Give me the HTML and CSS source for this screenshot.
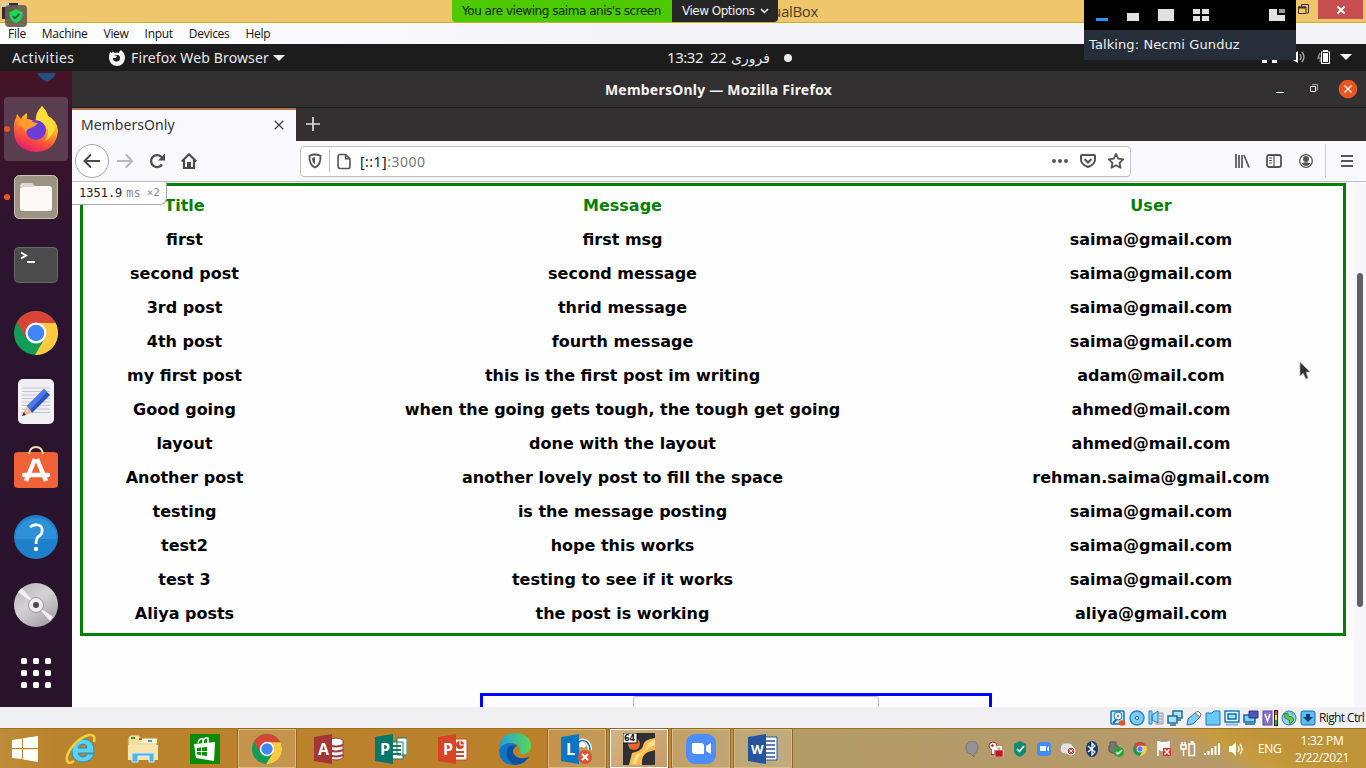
FILE: index.html
```html
<!DOCTYPE html>
<html lang="en">
<head>
<meta charset="utf-8">
<title>MembersOnly</title>
<link rel="stylesheet" href="styles.css">
</head>
<body>
<svg class="defs" width="0" height="0">
  <symbol id="chrome" viewBox="0 0 44 44">
    <circle cx="22" cy="22" r="22" fill="#129c57"/>
    <path d="M3 11A22 22 0 0 1 41 11Q42 12 41.500 12H22L12 27Z" fill="#d94436"/>
    <path d="M22 12H41.600A22 22 0 0 1 21 44L31 27Z" fill="#ffca42"/>
    <circle cx="22" cy="22" r="10.500" fill="#fff"/><circle cx="22" cy="22" r="8.300" fill="#4285f4"/>
  </symbol>
</svg>
<div class="screen">
  <header class="vm-title">
    <svg class="vm-logo" width="25" height="25" viewBox="0 0 25 25"><rect x="0" width="16" height="16" fill="#342838"/><path d="M4 12L14 3V15H5Z" fill="#80652f"/><path d="M0 0H7V4H0Z" fill="#d4ced0"/><rect x="3" y="2" width="22" height="22" rx="4" fill="#66614c" opacity=".93"/><path d="M14 6Q17 8 20.500 9V13Q19 18 14 20Q9 18 7.500 13V9Q11 8 14 6Z" fill="#1bd75b"/><path d="M10.800 13L13 15.300L17.500 10.800" stroke="#444e3e" stroke-width="1.800" fill="none"/></svg>
    <span class="vm-name">ualBox</span>
    <div class="win-controls"><svg width="12" height="12" viewBox="0 0 12 12" fill="none" stroke="#382e22"><path d="M3.500 3V.5H10.500V9H8.500"/><path d="M.5 3V9.500H8V3Z"/><path d="M0 3.500H8" stroke-width="2"/></svg><span class="win-close"><svg width="10" height="10" viewBox="0 0 10 10" stroke="#fff" stroke-width="2"><path d="M1.500 1.500L8.500 8.500M8.500 1.500L1.500 8.500"/></svg></span></div>
  </header>
  <nav class="vm-menu"><span>File</span><span>Machine</span><span>View</span><span>Input</span><span>Devices</span><span>Help</span></nav>
  <div class="gnome">
    <span class="activities">Activities</span>
    <div class="app-menu"><svg width="16" height="16" viewBox="0 0 16 16"><path d="M4 1.500L6 3Q8 2 10 3Q10 1 12 0Q16 3 16 8A8 8 0 0 1 0 8Q0 3 1.500 1.500L2.500 3Z" fill="#f0f0f0"/><path d="M8 5Q11 5 11 8A3.500 3.500 0 0 1 4 8L7 8L8 6L5 5Z" fill="#1c1c1c"/></svg><span class="app-name">Firefox Web Browser</span><i class="caret"></i></div>
    <div class="clock"><span class="time">13:32</span><span class="day">22</span><span class="month" lang="fa">فروری</span><i class="dot"></i></div>
    <svg class="gnome-tray" width="96" height="20" viewBox="0 0 96 20"><path d="M8 9H13V14H8ZM18 9H23V14H18Z" fill="#fff"/><path d="M39 6L44 2V14L39 11Z" fill="#fff"/><path d="M46 5Q48 8 46 11M48 3Q52 8 48 13" stroke="#aaa" fill="none" stroke-width="1.300"/><path d="M66 4L64 9H67L66 13" stroke="#8d8d8d" fill="none" stroke-width="1.500"/><path d="M69 1H74V2.500H76V15H67V2.500H69Z" fill="#fff"/><path d="M68.500 3.500H74.500V13.500H68.500Z" fill="none" stroke="#222" stroke-width="1"/><path d="M86 5H98L92 11Z" fill="#fff"/></svg>
  </div>
  <div class="vm-body">
    <aside class="dock">
      <svg class="dock-cut" width="24" height="12" viewBox="0 0 24 12"><path d="M3 2L21 2Q20 7 12 11Q7 9 3 4Z" fill="#254e83"/></svg>
      <div class="app active running"><svg width="46" height="48" viewBox="0 0 46 48"><defs><linearGradient id="ff" x1=".8" y1="0" x2=".35" y2="1"><stop offset="0" stop-color="#fff44f"/><stop offset=".4" stop-color="#ffb52a"/><stop offset=".72" stop-color="#ff5536"/><stop offset="1" stop-color="#e41a70"/></linearGradient></defs><path d="M29 1Q33 5 35 11Q44 15 45 26Q43 46 23 47Q3 46 1 28Q0 18 3 13L4 9L8 14Q10 10 14 8V14L22 16L29 1Z" fill="url(#ff)"/><circle cx="23" cy="25" r="10" fill="#6b3ed5"/><path d="M8 14L16 14Q20 18 25 18Q22 22 18 23Q13 24 13 28Q9 19 5 20Z" fill="#ff982f"/><path d="M29 1Q22 8 23 15Q32 16 35 26Q35 32 32 36Q42 30 42 20Q40 14 35 11Q33 5 29 1Z" fill="#ffde38"/></svg></div>
      <div class="app running"><svg width="44" height="44" viewBox="0 0 44 44"><rect x=".5" y=".5" width="43" height="43" rx="5" fill="#9c9483" stroke="#c8c4b5"/><path d="M6 11Q6 8 9 8H18L22 12H6Z" fill="#ddd6ce"/><path d="M6 14Q6 12 9 12H18L21 11H35Q38 11 38 14V33Q38 36 35 36H9Q6 36 6 33Z" fill="#fcf9f7"/></svg></div>
      <div class="app"><svg width="44" height="36" viewBox="0 0 44 36"><rect x=".5" y=".5" width="43" height="35" rx="4" fill="#4b4b4b" stroke="#686567"/><path d="M7 5.500L12 8.500L7 11.500M13 15H21" stroke="#fff" stroke-width="2" fill="none"/></svg></div>
      <div class="app"><svg width="44" height="44"><use href="#chrome"/></svg></div>
      <div class="app"><svg width="38" height="45" viewBox="0 0 38 45"><rect x="1" y="0" width="36" height="45" rx="5" fill="#f0f0f2"/><path d="M5 9H33M5 12.500H33M5 16H33M5 19.500H33M5 23H33M5 26.500H33M5 30H33M5 33.500H33" stroke="#c6c6ca"/><path d="M27 10L33 16L15 34L10 27Z" fill="#2953bf"/><path d="M27 10L30 13L13 31L10 27Z" fill="#4c78e8"/><path d="M10 27L15 34L5 37Z" fill="#edbd9f"/><path d="M7 33L9 36L5 37Z" fill="#333"/></svg></div>
      <div class="app"><svg class="store" width="44" height="44" viewBox="0 0 44 44"><rect y="7" width="44" height="36" rx="4" fill="#ef6136"/><path d="M15 9Q16 2 22 2T29 9" stroke="#f8d9ac" stroke-width="2" fill="none"/><path d="M21 14L12 36M23 14L32 36" stroke="#fff" stroke-width="4.500"/><path d="M10 30H34" stroke="#fff" stroke-width="4.500" stroke-linecap="round"/></svg></div>
      <div class="app"><svg width="44" height="44" viewBox="0 0 44 44"><circle cx="22" cy="22" r="22" fill="#1e7fca"/><path d="M1 24A21 21 0 0 1 43 24Z" fill="#2d91da"/><path d="M16 12Q20 9 24 10Q29 11 28 17Q28 19 25 21Q22 23 22 29" fill="none" stroke="#fff" stroke-width="2.800"/><circle cx="22" cy="34" r="2.200" fill="#fff"/></svg></div>
      <div class="app"><svg width="44" height="44" viewBox="0 0 44 44"><defs><linearGradient id="cd" x2=".7" y2="1"><stop stop-color="#b5b2b5"/><stop offset=".5" stop-color="#d4d2d4"/><stop offset="1" stop-color="#a6a3a6"/></linearGradient></defs><circle cx="22" cy="22" r="22" fill="url(#cd)"/><path d="M4 9L8 5L22 22L39 34L36 38L22 22Z" fill="#f3f3f3"/><circle cx="22" cy="22" r="7.500" fill="#ededed" stroke="#999"/><circle cx="22" cy="22" r="3" fill="#494949"/></svg></div>
      <div class="app"><svg width="30" height="30" viewBox="0 0 30 30" fill="#fff"><g id="dots"><rect width="6" height="6" rx="1.500"/><rect x="12" width="6" height="6" rx="1.500"/><rect x="24" width="6" height="6" rx="1.500"/></g><use href="#dots" y="12"/><use href="#dots" y="24"/></svg></div>
    </aside>
    <main class="browser">
      <div class="ff-title"><span>MembersOnly — Mozilla Firefox</span><svg class="ff-controls" width="90" height="20" viewBox="0 0 90 20"><path d="M8 12.500H16" stroke="#fff"/><path d="M44.500 5V4.500H49.500V10H48.500" stroke="#aaa" fill="none"/><path d="M42.500 6.500H47.500V11.500H42.500Z" stroke="#fff" fill="none"/><circle cx="80" cy="9" r="9.300" fill="#e95420"/><path d="M76.500 5.500L83.500 12.500M83.500 5.500L76.500 12.500" stroke="#fff" stroke-width="1.400"/></svg></div>
      <div class="tabs"><div class="tab"><span>MembersOnly</span><svg width="10" height="10" viewBox="0 0 10 10"><path d="M.7.7L9.300 9.300M9.300.7L.7 9.300" stroke="#444" stroke-width="1.300"/></svg></div><div class="new-tab"><svg width="14" height="14"><path d="M7 0V14M0 7H14" stroke="#ddd" stroke-width="1.700"/></svg></div></div>
      <div class="toolbar">
        <div class="back"><svg width="18" height="16" viewBox="0 0 18 16"><path d="M8 1.500L1.500 8L8 14.500M2 8H17" stroke="#4b4b4b" stroke-width="2" fill="none"/></svg></div>
        <svg class="forward" width="16" height="16" viewBox="0 0 16 16"><path d="M9 1.500L15 8L9 14.500M0 8H14" stroke="#b8b7ba" stroke-width="2" fill="none"/></svg>
        <svg class="reload" width="16" height="16" viewBox="0 0 16 16"><path d="M13 11.500A6 6 0 1 1 12 3.500L14.500 6" stroke="#4b4b4b" stroke-width="2.200" fill="none"/><path d="M16 .5V7.500H9Z" fill="#4b4b4b"/></svg>
        <svg class="home" width="16" height="16" viewBox="0 0 16 16"><path d="M.7 8.500L8 1.300L15.300 8.500M3 7V15H13V7" stroke="#4b4b4b" stroke-width="2.200" fill="none"/><path d="M6 9H10V15H6Z" fill="#4b4b4b"/></svg>
        <div class="urlbar">
          <svg width="14" height="16" viewBox="0 0 14 16"><path d="M7 1.500Q10 1.500 12.500 2.800Q13 12 7 14.500Q1 12 1.500 2.800Q4 1.500 7 1.500Z" stroke="#555" stroke-width="1.800" fill="none"/><path d="M7 4V11.500Q4 9 4 5Z" fill="#555"/></svg><i class="url-sep"></i>
          <svg width="14" height="17" viewBox="0 0 13 15"><path d="M3 1H8L12 5V12.500Q12 14 10 14H3Q1 14 1 12V3Q1 1 3 1ZM8 1V5H12" stroke="#555" stroke-width="1.500" fill="none"/></svg>
          <span class="url"><b>[::1]</b>:3000</span>
          <svg class="url-actions" width="76" height="18" viewBox="0 0 76 18"><g fill="#555"><circle cx="4" cy="9" r="2"/><circle cx="10" cy="9" r="2"/><circle cx="16" cy="9" r="2"/></g><path d="M32 3H44Q45 3 45 4V8Q45 12 38 15Q31 12 31 8V4Q31 3 32 3ZM34.500 7L38 10.500L41.500 7" stroke="#555" stroke-width="2" fill="none"/><path d="M66 2L68.200 6.600L73.200 7.300L69.500 10.800L70.500 15.800L66 13.200L61.500 15.800L62.500 10.800L58.800 7.300L63.800 6.600Z" stroke="#555" stroke-width="1.800" fill="none" stroke-linejoin="round"/></svg>
        </div>
        <div class="tools"><svg width="16" height="14" viewBox="0 0 16 14"><path d="M2 0V14M5 1V14M8 1V14M10 1L15 13.500" stroke="#555" stroke-width="1.700"/></svg><svg width="16" height="14" viewBox="0 0 16 14"><rect x="1" y="1" width="14" height="12" rx="2" stroke="#555" stroke-width="1.800" fill="none"/><path d="M8 1V13M3 4H6M3 6.500H6M3 9H6" stroke="#555" stroke-width="1.200"/></svg><svg width="14" height="14" viewBox="0 0 14 14"><circle cx="7" cy="7" r="6.300" fill="#fff" stroke="#555" stroke-width="1.300"/><circle cx="7" cy="5" r="3" fill="#555"/><path d="M2.500 9.500Q7 7 11.500 9.500Q9 12 7 12T2.500 9.500Z" fill="#555"/></svg></div>
        <div class="hamburger"><svg width="12" height="12" viewBox="0 0 12 12"><path d="M0 1H12M0 6H12M0 11H12" stroke="#555" stroke-width="2"/></svg></div>
      </div>
      <section class="page">
        <table class="posts">
          <thead><tr><th class="title-col">Title</th><th class="message-col">Message</th><th>User</th></tr></thead>
          <tbody>
            <tr><td>first</td><td>first msg</td><td>saima@gmail.com</td></tr>
            <tr><td>second post</td><td>second message</td><td>saima@gmail.com</td></tr>
            <tr><td>3rd post</td><td>thrid message</td><td>saima@gmail.com</td></tr>
            <tr><td>4th post</td><td>fourth message</td><td>saima@gmail.com</td></tr>
            <tr><td>my first post</td><td>this is the first post im writing</td><td>adam@mail.com</td></tr>
            <tr><td>Good going</td><td>when the going gets tough, the tough get going</td><td>ahmed@mail.com</td></tr>
            <tr><td>layout</td><td>done with the layout</td><td>ahmed@mail.com</td></tr>
            <tr><td>Another post</td><td>another lovely post to fill the space</td><td>rehman.saima@gmail.com</td></tr>
            <tr><td>testing</td><td>is the message posting</td><td>saima@gmail.com</td></tr>
            <tr><td>test2</td><td>hope this works</td><td>saima@gmail.com</td></tr>
            <tr><td>test 3</td><td>testing to see if it works</td><td>saima@gmail.com</td></tr>
            <tr><td>Aliya posts</td><td>the post is working</td><td>aliya@gmail.com</td></tr>
          </tbody>
        </table>
        <div class="form"><div class="field"></div></div>
        <div class="profiler"><span class="ms">1351.9</span><span class="unit">ms</span><span class="times">×2</span></div>
        <i class="scroll-track"><i class="scroll-thumb"></i></i>
        <svg class="pointer" width="12" height="20" viewBox="0 0 12 20"><path d="M1 1V15L4 12L7 18L9 17L7 11H11Z" fill="#333" stroke="#aaa" stroke-width=".7"/></svg>
      </section>
    </main>
  </div>
  <div class="vm-status">
    <svg width="16" height="16" viewBox="0 0 16 16"><rect x="1" y="1" width="13" height="13" rx="1" fill="#c3ebff" stroke="#1674ba" stroke-width="1.500"/><circle cx="8" cy="6" r="4" fill="#fff" stroke="#1674ba"/><circle cx="8" cy="6" r="1" fill="#1674ba"/><path d="M3 13L7 9" stroke="#1674ba" stroke-width="2"/><ellipse cx="12" cy="13" rx="3.500" ry="2.700" fill="#e35730"/></svg>
    <svg width="16" height="16" viewBox="0 0 16 16"><circle cx="8" cy="8" r="7" fill="#7acdf8" stroke="#2384c6" stroke-width="1.400"/><circle cx="8" cy="8" r="1.700" fill="#fff" stroke="#1674ba"/></svg>
    <svg width="16" height="16" viewBox="0 0 16 16"><path d="M10 3H15V14H7" stroke="#999" fill="#ddd"/><path d="M11 6H14M11 9H14M11 12H14" stroke="#999"/><path d="M1 1H4V14H1ZM4 5L10 1V13L4 10Z" fill="#8bd7fa" stroke="#287eb7"/></svg>
    <svg width="16" height="16" viewBox="0 0 16 16"><path d="M6 1H15V8H6ZM8 10H14" fill="#a9e3fa" stroke="#246c94" stroke-width="1.500"/><path d="M1 6H10V13H1ZM3 15H9" fill="#a9e3fa" stroke="#246c94" stroke-width="1.500"/></svg>
    <svg width="16" height="16" viewBox="0 0 16 16"><path d="M1 15L2 9L9 3L14 7L7 14Z" fill="#7dcdf8" stroke="#3074ad"/><path d="M9 3L12 1L15 4L14 7Z" fill="#fff" stroke="#777"/></svg>
    <svg width="16" height="16" viewBox="0 0 16 16"><path d="M1 3H7L9 1H15V15H1Z" fill="#69c8fa" stroke="#177bc0"/></svg>
    <svg width="16" height="16" viewBox="0 0 16 16"><rect x="1" y="1" width="14" height="11" fill="#e9faff" stroke="#177bc0" stroke-width="1.500"/><rect x="4" y="4" width="8" height="5" fill="#a0e1fa" stroke="#1569ad" stroke-width="1.500"/><path d="M2 14.500H14" stroke="#8abbd5" stroke-width="2"/></svg>
    <svg width="16" height="16" viewBox="0 0 16 16"><path d="M1 5H12V12H1ZM2 14H12" fill="#7cd2fb" stroke="#17679e" stroke-width="1.500"/><path d="M6 1H15V8H6Z" fill="#4656ba" stroke="#333b83"/></svg>
    <svg width="16" height="16" viewBox="0 0 16 16"><rect x="1" y="1" width="9" height="14" fill="#8672cc" stroke="#5a489e"/><path d="M3 4L5.500 11L8 4" fill="none" stroke="#fff" stroke-width="1.500"/><rect x="12" width="4" height="16" fill="#222"/><path d="M13 1H15V5H13Z" fill="#e44"/><path d="M13 5H15V10H13Z" fill="#fd4"/><path d="M13 10H15V15H13Z" fill="#2b2"/></svg>
    <svg width="16" height="16" viewBox="0 0 16 16"><circle cx="8" cy="8" r="7" fill="#8dd4f7" stroke="#2379b5"/><path d="M3 4L7 3L7 6L11 7L13 10L9 14L8 10L4 8Z" fill="#6cc24a" stroke="#2f8a24"/><path d="M9 2L12 3L13 6L11 5Z" fill="#6cc24a"/></svg>
    <svg width="16" height="16" viewBox="0 0 16 16"><rect x="1" y="1" width="14" height="14" rx="2" fill="#59bdf3" stroke="#1371b1"/><path d="M6 4H10V7H13L8 12L3 7H6Z" fill="#173d69"/></svg>
    <span>Right Ctrl</span>
  </div>
  <footer class="taskbar">
    <svg class="start" width="28" height="26" viewBox="0 0 28 26"><path d="M1 4L11 2.500V12H1ZM12 2.300L27 0V12H12ZM1 13.300H11V23L1 22ZM12 13.300H27V26L12 23.500Z" fill="#fff"/></svg>
    <div class="tasks">
      <div><svg width="32" height="32" viewBox="0 0 32 32"><path d="M29 21Q26 29 18 29Q7 29 7 18Q7 6 18 6Q30 6 29 20H13Q14 24 18 24Q21 24 22 21ZM13 15H22Q22 11 18 11Q14 11 13 15Z" fill="#5ed0f2" stroke="#2494c2" fill-rule="evenodd"/><path d="M29 9Q31 1 24 2Q15 4 7 14Q-1 25 3 29Q5 31 9 28" fill="none" stroke="#f3cf38" stroke-width="2.500"/></svg></div>
      <div><svg width="32" height="30" viewBox="0 0 32 30"><path d="M1 4L4 1H12L14 4H30V25H1Z" fill="#f1dda0" stroke="#b99b4a"/><path d="M14 5H30V9H14Z" fill="#fff5d2"/><path d="M4 3H8V5H4Z" fill="#369743"/><path d="M12 4H15V6H12Z" fill="#d94d35"/><path d="M21 6H25V8H21Z" fill="#38a1d4"/><path d="M1 11H31V26H1Z" fill="#f7e5ab"/><path d="M5 28V19H27V28H22V22H11V28Z" fill="#55b6e5" stroke="#c0efff"/></svg></div>
      <div><svg width="30" height="30" viewBox="0 0 30 30"><rect width="30" height="30" fill="#098c08"/><path d="M4 10L25 8L24 27L6 24Z" fill="#fff"/><path d="M8 9Q9 4 13 5V9M13 8Q14 3 18 4V9" stroke="#fff" stroke-width="1.500" fill="none"/><path d="M7 14L11 13.500V17H7ZM12 13.400L17 13V17H12ZM7 18H11V21L7 20.500ZM12 18H17V22L12 21.500Z" fill="#098c08"/></svg></div>
      <div class="open"><svg width="30" height="30"><use href="#chrome"/></svg></div>
      <div><svg width="30" height="30" viewBox="0 0 30 30"><g fill="#fff" stroke="#a33a3d"><path d="M15 6Q22 2 29 6V24Q22 28 15 24Z"/><path d="M15 11Q22 14 29 11M15 16Q22 19 29 16M15 21Q22 24 29 21" fill="none" stroke-width="2"/></g><path d="M0 3L18 0V30L0 27Z" fill="#a43538"/><text x="4" y="21" class="office">A</text></svg></div>
      <div><svg width="32" height="30" viewBox="0 0 32 30"><path d="M22 4H32V21H22ZM16 8H28V25H16Z" fill="#fff" stroke="#187b61"/><path d="M18 12H26M18 16H26M18 20H26" stroke="#187b61" stroke-width="2"/><path d="M0 3L18 0V30L0 27Z" fill="#087669"/><text x="5" y="21" class="office">P</text></svg></div>
      <div><svg width="30" height="30" viewBox="0 0 30 30"><path d="M16 5H29V26H16Z" fill="#fff" stroke="#cf4425"/><path d="M18 18H26M18 22H26" stroke="#cf4425" stroke-width="2"/><circle cx="22" cy="11" r="4" fill="#cf4425"/><path d="M22 11V6M22 11H27" stroke="#fff"/><path d="M0 3L18 0V30L0 27Z" fill="#d84425"/><text x="5" y="21" class="office">P</text></svg></div>
      <div><svg width="32" height="32" viewBox="0 0 32 32"><defs><linearGradient id="ed"><stop stop-color="#269edc"/><stop offset="1" stop-color="#57d957"/></linearGradient></defs><path d="M0 17Q0 0 17 0Q32 1 32 14Q31 21 24 21Q18 20 21 17Q21 10 12 10Q3 10 0 17Z" fill="url(#ed)"/><path d="M0 17Q3 10 12 10Q17 11 18 13Q13 15 14 20Q18 28 30 24Q25 32 16 32Q0 32 0 17Z" fill="#0c76c9"/><path d="M8 16Q6 28 16 32Q24 32 30 24Q18 28 14 20Q13 15 18 13Q11 11 8 16Z" fill="#09539e"/></svg></div>
      <div class="open"><svg width="32" height="30" viewBox="0 0 32 30"><path d="M18 8Q21 5 26 8Q29 11 29 16M18 12Q22 9 24 13" fill="none" stroke="#fff" stroke-width="4"/><path d="M18 8Q21 5 26 8Q29 11 29 16" fill="none" stroke="#1773ad" stroke-width="1.500"/><path d="M0 3L18 0V30L0 27Z" fill="#0878c4"/><text x="5" y="21" class="office">L</text><circle cx="24" cy="23" r="7" fill="#dc5434"/><path d="M21 20L27 26M27 20L21 26" stroke="#fff" stroke-width="2"/></svg></div>
      <div class="open focus"><svg width="32" height="32" viewBox="0 0 32 32"><rect width="32" height="32" fill="#303136"/><circle cx="11" cy="11" r="6" fill="#eb6632"/><path d="M32 5Q21 6 20 13Q19 18 9 20L6 32H19Q18 22 25 19L32 17Z" fill="#ffbc4c"/><path d="M32 6Q25 9 23 15Q20 20 13 22L9 31H13Q15 21 22 18Q26 14 32 12Z" fill="#ffe094"/><rect width="14" height="10" fill="#fff" stroke="#111"/><text x="1" y="8" class="bits">64</text></svg></div>
      <div class="open"><svg width="30" height="30" viewBox="0 0 30 30"><rect width="30" height="30" rx="9" fill="#4c8dff"/><path d="M6 9H15Q18 9 18 12V20H9Q6 20 6 17ZM20 12L25 9V20L20 17Z" fill="#fff"/></svg></div>
      <div class="open"><svg width="30" height="30" viewBox="0 0 30 30"><path d="M16 3H29V26H16Z" fill="#fff" stroke="#28559c"/><path d="M18 7H27M18 11H27M18 15H27M18 19H27M18 23H27" stroke="#28559c" stroke-width="1.500"/><path d="M0 3L18 0V30L0 27Z" fill="#26539c"/><text x="3" y="20" class="office word">W</text></svg></div>
    </div>
    <div class="tray">
      <svg width="16" height="16" viewBox="0 0 16 16"><path d="M8 0Q14 0 14 7Q14 11 10 13L10 16L7 13Q2 12 2 7Q2 0 8 0Z" fill="#929198" stroke="#777479"/></svg>
      <svg width="16" height="16" viewBox="0 0 16 16"><path d="M5 8V14M6 7L9 9" stroke="#a12828" stroke-width="4"/><circle cx="5" cy="5" r="4" fill="#fff" stroke="#a12828"/><path d="M5 8V13M6 7L9 9" stroke="#fff" stroke-width="2.500"/><circle cx="4.500" cy="4.500" r="1.300" fill="#c31521"/><path d="M8 9H15V16H7V9Z" fill="#c31521" stroke="#fff" stroke-width=".5"/><path d="M9 9V6H13V9" fill="none" stroke="#fff" stroke-width="1.500"/></svg>
      <svg width="16" height="16" viewBox="0 0 16 16"><path d="M8 0L14 3V11Q11 15 8 16Q4 15 2 11V3Z" fill="#138b72"/><path d="M5 8L7.500 10.500L12 5" stroke="#fff" stroke-width="1.500" fill="none"/></svg>
      <svg width="16" height="16" viewBox="0 0 16 16"><rect x="1" y="1" width="14" height="14" rx="4" fill="#438cf5"/><path d="M4 5H10V10H4ZM11 7L13 5V10L11 9Z" fill="#fff"/></svg>
      <svg width="16" height="16" viewBox="0 0 16 16"><path d="M0 8Q1 1 6 2Q11 1 13 5Q17 11 11 13H5Q0 12 0 8Z" fill="#e6e2df" stroke="#9e9999"/><circle cx="11" cy="10" r="4" fill="#c64444" stroke="#fff"/><path d="M9 8L13 12M13 8L9 12" stroke="#fff"/></svg>
      <svg width="16" height="16" viewBox="0 0 16 16"><ellipse cx="8" cy="8" rx="6" ry="8" fill="#123a72"/><path d="M4 5L11 11L8 14V2L11 5L4 11" stroke="#fff" stroke-width="1.300" fill="none"/></svg>
      <svg width="16" height="16" viewBox="0 0 16 16"><path d="M2 1H8V5H10V11Q5 14 1 10V5H2Z" fill="#777" stroke="#555"/><circle cx="11" cy="11" r="5" fill="#25a631"/><path d="M8 11L10 13L14 9" stroke="#fff" stroke-width="1.500" fill="none"/></svg>
      <svg width="14" height="14"><use href="#chrome"/></svg>
      <svg width="16" height="16" viewBox="0 0 16 16"><path d="M2 0V15M3 1Q7 3 13 1V9Q8 11 3 8Z" stroke="#fff" stroke-width="1.500" fill="#fff"/><rect x="7" y="7" width="8" height="8" fill="#cf3636"/><path d="M8.500 8.500L13.500 13.500M13.500 8.500L8.500 13.500" stroke="#fff" stroke-width="1.500"/></svg>
      <svg width="16" height="16" viewBox="0 0 16 16" stroke="#fff" fill="none" stroke-width="1.500"><path d="M1 4H6V8H1ZM2 1V4M5 1V4M3.500 8V15"/><path d="M9 3H14.500V14.500H9ZM10.500 1H13V3"/></svg>
      <svg width="16" height="16" viewBox="0 0 16 16" fill="#fff"><path d="M0 12H2V14H0ZM3.500 10H5.500V14H3.500ZM7 7H9V14H7ZM10.500 5H12.500V14H10.500ZM14 2H16V14H14Z"/></svg>
      <svg width="16" height="16" viewBox="0 0 16 16"><path d="M1 5H4L8 1V15L4 11H1Z" fill="#fff"/><path d="M10 5Q12 8 10 11M12 3Q16 8 12 13" stroke="#fff" fill="none" stroke-width="1.300"/></svg>
    </div>
    <span class="lang">ENG</span>
    <div class="date"><span>1:32 PM</span><span>2/22/2021</span></div>
  </footer>
  <div class="share"><span class="viewing">You are viewing saima anis's screen</span><span class="options">View Options <svg width="9" height="6" viewBox="0 0 9 6"><path d="M1 1L4.500 4.500L8 1" stroke="#fff" stroke-width="1.500" fill="none"/></svg></span></div>
  <div class="meeting"><svg width="212" height="30" viewBox="0 0 212 30" fill="#e1e1e1"><path d="M12 18H24V21H12Z" fill="#2c92ff"/><path d="M43 13H55V21H43ZM74 9H90V21H74ZM109 9H116V14H109ZM118 9H125V14H118ZM109 16H116V21H109ZM118 16H125V21H118ZM185 9H193V15H201V21H185Z"/><path d="M195 9H201V13H195Z" fill="#999"/></svg><div class="talking">Talking: Necmi Gunduz</div></div>
</div>
</body>
</html>
```
FILE: styles.css
```css
* { box-sizing: border-box; }
body { margin: 0; overflow: hidden; font-family: "Open Sans", sans-serif; }
svg { display: block; flex: none; }
.defs { position: absolute; }
.screen { position: relative; width: 1366px; height: 768px; display: grid; grid-template-rows: 23px 21px 27px 636px 21px 40px; overflow: hidden; }
.vm-title { background: #f0c66c; border-bottom: 1px solid #c5b323; display: flex; justify-content: space-between; }
.vm-logo { position: relative; top: 3px; left: 2px; z-index: 3; }
.vm-name { font-size: 15px; line-height: 23px; color: #4c4028; margin-left: 747px; letter-spacing: -.3px; }
.win-controls { margin-left: auto; display: flex; gap: 8px; padding-right: 3px; }
.win-controls > svg { margin-top: 4px; }
.win-close { width: 45px; height: 19px; background: #c84f50; display: flex; align-items: center; justify-content: center; }
.vm-menu { background: linear-gradient(90deg, #fff, #f5f4f9 45%); display: flex; gap: 16px; padding-left: 8px; font: 12px/22px "Open Sans", sans-serif; letter-spacing: -.29px; color: #111; }
.gnome { background: #1c1c1c; color: #e8e8e8; display: flex; font: 15px/27px "Noto Sans", sans-serif; }
.activities { width: 109px; padding-left: 12px; letter-spacing: .4px; font-size: 14px; }
.app-menu { display: flex; align-items: center; }
.app-name { margin-left: 6px; width: 142px; white-space: nowrap; font-size: 14px; letter-spacing: .13px; }
.caret { border: 6px solid transparent; border-top-color: #eee; border-bottom: 0; }
.clock { display: flex; align-items: center; margin-left: 382px; }
.time { width: 43px; letter-spacing: -.45px; }
.day { width: 21px; letter-spacing: -.5px; }
.month { font: 14px/20px "DejaVu Sans", sans-serif; width: 40px; }
.dot { width: 8px; height: 8px; border-radius: 50%; background: #eee; margin-left: 13px; }
.gnome-tray { margin: 5px 16px 0 auto; overflow: visible; }
.vm-body { display: grid; grid-template-columns: 72px 1294px; min-height: 0; }
.dock { background: linear-gradient(#451426, #2c1430 28%, #28132b); display: flex; flex-direction: column; align-items: center; }
.dock-cut { margin-left: 22px; height: 24px; padding-bottom: 12px; }
.app { width: 64px; height: 64px; margin: 2px 0; display: flex; align-items: center; justify-content: center; position: relative; }
.store { margin-bottom: 4px; }
.active { background: #5b3d50; border-radius: 4px; }
.running::before { content: ""; position: absolute; width: 6px; height: 6px; border-radius: 50%; background: #e95420; left: 0; top: 29px; }
.browser { display: grid; grid-template-rows: 37px 33px 41px 525px; min-width: 0; }
.ff-title { position: relative; display: flex; justify-content: center; background: #333031; border-bottom: 1px solid #1c1a1b; color: #f4f4f4; font: 700 14px/37px "Noto Sans", sans-serif; padding-right: 1px; letter-spacing: .22px; }
.ff-controls { position: absolute; right: 8px; top: 9px; width: 90px; }
.tabs { display: flex; background: #333031; }
.tab { width: 224px; background: #f9f8fc; border-top: 2px solid #b7714c; display: flex; justify-content: space-between; align-items: center; padding: 0 12px 2px 9px; font: 14px/30px "Noto Sans", sans-serif; color: #333; letter-spacing: .06px; }
.new-tab { width: 34px; padding-bottom: 1px; display: flex; align-items: center; justify-content: center; }
.toolbar { background: #f9f8fc; border-bottom: 1px solid #bebdc1; display: flex; align-items: center; padding-left: 3px; }
.back { width: 34px; height: 34px; border: 1px solid #aaa; border-radius: 50%; background: #fff; display: flex; align-items: center; justify-content: center; }
.forward { margin-left: 8px; }
.reload, .home { margin-left: 16px; }
.urlbar { width: 831px; height: 31px; margin-left: 103px; border: 1px solid #bfbfc2; border-radius: 4px; background: #fff; display: flex; align-items: center; padding-left: 7px; padding-right: 4px; }
.url-sep { height: 22px; width: 1px; margin: 0 7px; background: #bbb; }
.url { font: 14px/28px "Noto Sans", sans-serif; color: #777; margin-left: 9px; letter-spacing: .5px; padding-top: 1px; }
.url b { color: #111; font-weight: 400; }
.url-actions { margin-left: auto; }
.tools { display: flex; gap: 16px; align-items: center; margin-left: 103px; }
.tools svg:last-child { margin-left: 1px; }
.hamburger { height: 34px; margin-left: 12px; border-left: 1px solid #ccc; padding-left: 15px; display: flex; align-items: center; }
.page { position: relative; background: #fefefe; overflow: hidden; padding: 1px 8px 0; }
.posts { width: 1266px; height: 453px; table-layout: fixed; border: 3px solid #048004; border-collapse: separate; border-spacing: 0; padding: 2px 0 3px; font: 700 16px/20px "DejaVu Sans", sans-serif; text-align: center; color: #000; }
.posts th, .posts td { padding: 2px 0 0; height: 34px; }
.posts th { color: #048004; }
.title-col { width: 203px; }
.message-col { width: 673px; }
.form { width: 512px; height: 90px; margin: 57px 0 0 400px; border: 3px solid #0000ff; }
.field { width: 246px; height: 30px; border: 1px solid #bbb; border-radius: 3px; margin-left: 150px; }
.profiler { position: absolute; left: 0; top: 0; width: 95px; height: 23px; padding-left: 7px; background: #fff; border: 1px solid #aaa; border-width: 0 1px 1px 0; border-bottom-right-radius: 7px; display: flex; font: 12px/22px "DejaVu Sans Mono", monospace; color: #222; }
.unit { margin-left: 4px; color: #888; }
.times { margin-left: 6px; color: #888; font-size: 11px; letter-spacing: -.3px; }
.scroll-track { position: absolute; right: 0; top: 0; width: 12px; height: 525px; background: #f7f6fa; }
.scroll-thumb { display: block; margin: 91px 0 0 3px; width: 6px; height: 334px; background: #626062; border-radius: 3px; }
.pointer { position: absolute; left: 1227px; top: 179px; }
.vm-status { display: flex; align-items: center; justify-content: flex-end; gap: 3px; padding-right: 2px; background: #f0eff1; font: 12px/20px "Open Sans", sans-serif; color: #111; white-space: nowrap; }
.vm-status span { width: 45px; letter-spacing: -.62px; }
.taskbar { display: flex; align-items: center; border-top: 1px solid #9d7025; background: linear-gradient(207deg, #bf9337 0 50px, #c69c3f 76px, #c69c3f00 96px), linear-gradient(90deg, #bd8c39, #bb822d 4%, #bb802a 40%, #b39c67 57%, #b69a6b 83%, #b99b69); }
.start { margin-left: 11px; }
.tasks { display: flex; gap: 4px; margin-left: 13px; height: 39px; }
.tasks > div { width: 58px; height: 39px; display: flex; align-items: center; justify-content: center; }
.open { border: 1px solid #dabd83; background: #ffffff28; box-shadow: 0 0 0 1px #936720; }
.tasks > .focus { border-color: #fff; background: linear-gradient(135deg, #ffffff60, #d9a58188); }
.office { font: 700 16px "Open Sans", sans-serif; fill: #fff; }
.office.word { font-size: 13px; }
.bits { font: 700 8px "DejaVu Sans", sans-serif; fill: #111; }
.tray { display: flex; align-items: center; gap: 8px; margin-left: 172px; }
.tray svg:nth-child(8) { margin: 0 1px; }
.lang { color: #fff; font: 12px/20px "Open Sans", sans-serif; margin-left: 14px; width: 24px; letter-spacing: -.3px; }
.date { width: 66px; margin-left: 7px; display: grid; text-align: center; color: #fff; font: 12px/17px "Open Sans", sans-serif; letter-spacing: -.3px; margin-top: 1px; }
.share { position: absolute; z-index: 4; left: 452px; top: 0; height: 22px; display: flex; font: 12px/22px "DejaVu Sans", sans-serif; white-space: nowrap; overflow: hidden; border-radius: 0 0 4px 4px; }
.viewing { width: 220px; padding-left: 10px; background: #4cc900; color: #112800; letter-spacing: -.47px; }
.options { width: 106px; padding-left: 10px; background: #262626; color: #eee; letter-spacing: -.5px; }
.options svg { display: inline-block; vertical-align: 1px; margin-left: 2px; }
.meeting { position: absolute; z-index: 4; left: 1084px; top: 0; width: 212px; height: 60px; background: #000; }
.talking { height: 30px; padding-left: 5px; background: #252e39; color: #eee; font: 13px/29px "DejaVu Sans", sans-serif; letter-spacing: .1px; }
```
